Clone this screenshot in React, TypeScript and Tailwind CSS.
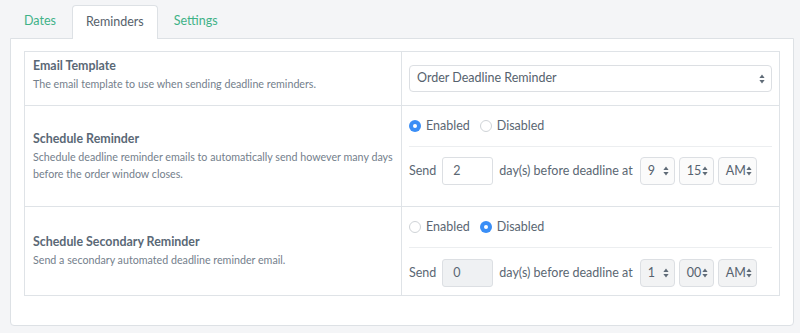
import React from "react";

function Arrows() {
  return (
    <svg width="6" height="10" viewBox="0 0 6 10" className="shrink-0">
      <path d="M3 0.5 L5.6 4 H0.4 Z" fill="#5f6b77" />
      <path d="M3 9.5 L5.6 6 H0.4 Z" fill="#5f6b77" />
    </svg>
  );
}

function Select({
  value,
  width,
  disabled,
  grow,
}: {
  value: string;
  width?: string;
  disabled?: boolean;
  grow?: boolean;
}) {
  return (
    <div
      className={`flex items-center justify-between rounded-[4px] border border-[#dcdfe3] ${
        grow ? "h-[27px] flex-1 pl-[7px] pr-[6px]" : "h-[28px] pl-[7px] pr-[5px]"
      } ${width ?? ""} ${disabled ? "bg-[#f2f3f4]" : grow ? "bg-white" : "bg-[#fbfbfb]"}`}
    >
      <span className="text-[12.5px] text-[#56626e]">{value}</span>
      <Arrows />
    </div>
  );
}

function Radio({ checked, label }: { checked: boolean; label: string }) {
  return (
    <div className="flex items-center gap-[5px]">
      {checked ? (
        <span className="flex h-[12px] w-[12px] items-center justify-center rounded-full bg-[#3a8ef6]">
          <span className="h-[4px] w-[4px] rounded-full bg-white" />
        </span>
      ) : (
        <span className="h-[12px] w-[12px] rounded-full border border-[#cfd3d7] bg-white" />
      )}
      <span className="text-[12.5px] text-[#5b6773]">{label}</span>
    </div>
  );
}

function SendRow({
  days,
  hour,
  minute,
  disabled,
}: {
  days: string;
  hour: string;
  minute: string;
  disabled?: boolean;
}) {
  return (
    <div className="flex items-center text-[12.5px] text-[#5b6773]">
      <span>Send</span>
      <div
        className={`ml-[6px] flex h-[28px] w-[51px] items-center rounded-[3px] border border-[#dcdfe3] pl-[10px] ${
          disabled ? "bg-[#eff1f3]" : "bg-white"
        }`}
      >
        {days}
      </div>
      <span className="ml-[6px] whitespace-nowrap">day(s) before deadline at</span>
      <div className="ml-[7px] flex gap-[4px]">
        <Select value={hour} width="w-[35px]" disabled={disabled} />
        <Select value={minute} width="w-[35px]" disabled={disabled} />
        <Select value="AM" width="w-[39px]" disabled={disabled} />
      </div>
    </div>
  );
}

function Label({ title, desc }: { title: string; desc: string }) {
  return (
    <div className="flex flex-col justify-center border-r border-[#dfe3e7] pl-[8px] pr-[4px]">
      <div className="text-[12.4px] font-bold leading-[16px] text-[#5a6876]">{title}</div>
      <div className="mt-[1px] text-[10.7px] leading-[17px] text-[#74808c]">{desc}</div>
    </div>
  );
}

export default function App() {
  return (
    <div
      className="h-[333px] w-[800px] bg-[#f4f5f7] px-[10px] pt-[5px]"
      style={{ fontFamily: 'Lato, "Open Sans", "Liberation Sans", sans-serif' }}
    >
      {/* Tabs */}
      <div className="flex h-[33px] gap-[2px]">
        <div className="flex items-center px-[14px] text-[12.5px] text-[#3fb287]">Dates</div>
        <div className="relative -mb-px flex h-[34px] items-center rounded-t-[4px] border border-b-0 border-[#dde1e5] bg-white px-[13px] text-[12.5px] text-[#56616b]">
          Reminders
        </div>
        <div className="flex items-center px-[14px] text-[12.5px] text-[#3fb287]">Settings</div>
      </div>

      {/* Panel */}
      <div className="h-[288px] w-[784px] rounded-b-[4px] border border-[#dde1e5] bg-white px-[13px] pt-[12px]">
        <div className="border border-[#dfe3e7]">
          {/* Row 1 */}
          <div className="grid h-[54px] grid-cols-[377px_1fr] border-b border-[#dfe3e7]">
            <div className="flex flex-col border-r border-[#dfe3e7] pl-[8px] pr-[4px] pt-[6px]">
              <div className="text-[12.4px] font-bold leading-[16px] text-[#5a6876]">Email Template</div>
              <div className="mt-[1px] text-[10.7px] leading-[17px] text-[#74808c]">
                The email template to use when sending deadline reminders.
              </div>
            </div>
            <div className="flex items-center px-[7px]">
              <Select value="Order Deadline Reminder" grow />
            </div>
          </div>

          {/* Row 2 */}
          <div className="grid h-[101px] grid-cols-[377px_1fr] border-b border-[#dfe3e7]">
            <Label
              title="Schedule Reminder"
              desc="Schedule deadline reminder emails to automatically send however many days before the order window closes."
            />
            <div className="flex flex-col px-[7px] pt-[10px]">
              <div className="flex h-[20px] items-center gap-[10px]">
                <Radio checked label="Enabled" />
                <Radio checked={false} label="Disabled" />
              </div>
              <div className="mt-[10px] border-t border-[#eceef0] pt-[10px]">
                <SendRow days="2" hour="9" minute="15" />
              </div>
            </div>
          </div>

          {/* Row 3 */}
          <div className="grid h-[88px] grid-cols-[377px_1fr]">
            <Label
              title="Schedule Secondary Reminder"
              desc="Send a secondary automated deadline reminder email."
            />
            <div className="flex flex-col px-[7px] pt-[10px]">
              <div className="flex h-[20px] items-center gap-[10px]">
                <Radio checked={false} label="Enabled" />
                <Radio checked label="Disabled" />
              </div>
              <div className="mt-[10px] border-t border-[#eceef0] pt-[11px]">
                <SendRow days="0" hour="1" minute="00" disabled />
              </div>
            </div>
          </div>
        </div>
      </div>
    </div>
  );
}
